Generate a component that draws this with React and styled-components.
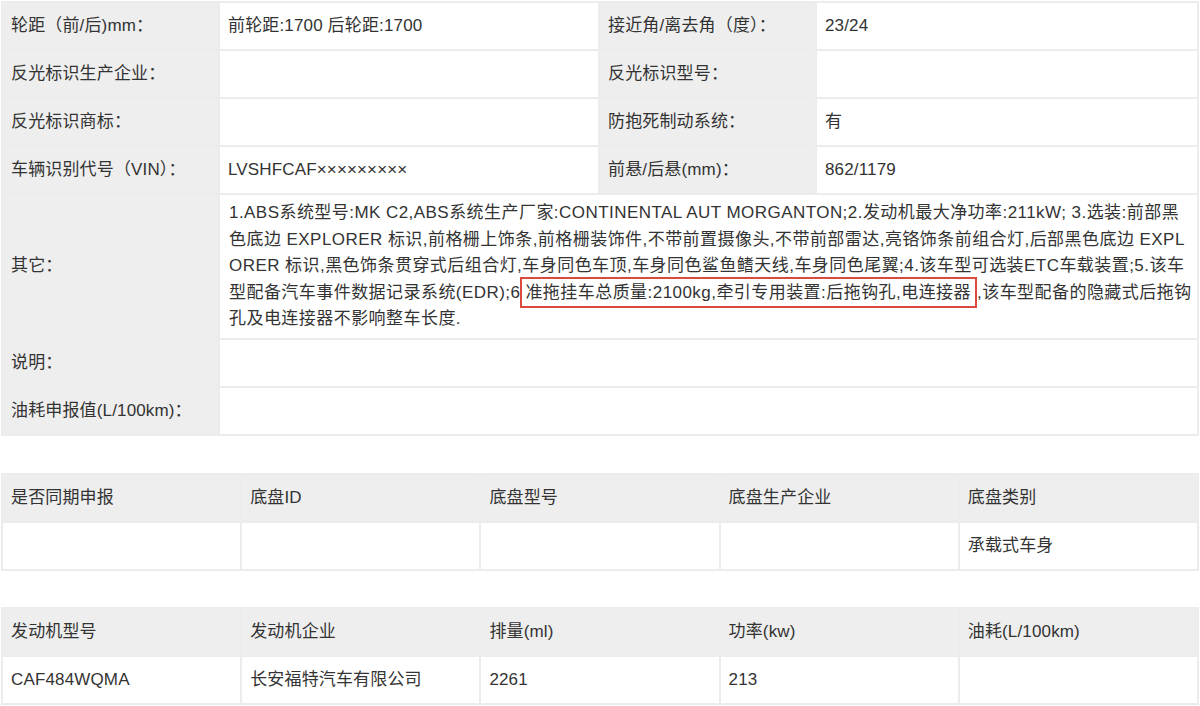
import React from 'react';
import styled, {createGlobalStyle} from 'styled-components';

const GlobalStyle = createGlobalStyle`
  body {
    margin: 0;
    background: #fff;
    color: #333;
    font-family: "Liberation Sans", Arial, "Noto Sans CJK SC", sans-serif;
  }
`;

const Page = styled.div`
  padding: 1px 1px 0 1px;
  width: 1198px;
`;

const Table = styled.table`
  width: 100%;
  table-layout: fixed;
  border-collapse: collapse;
  font-size: 17px;
  margin-top: ${props => props.$gap || 0}px;
`;

const Cell = styled.td`
  border: 2px solid #ececec;
  height: 46px;
  padding: ${props => props.$tall ? '5px 9px' : '0 8px'};
  vertical-align: middle;
  text-align: left;
  line-height: ${props => props.$tall ? '26.5px' : '20px'};
  letter-spacing: ${props => props.$tall ? '0.45px' : '0.15px'};
  background: ${props => props.$head ? '#eeeeee' : '#fff'};
  color: #333;
`;

const Line = styled.span`
  display: block;
  white-space: nowrap;
`;

const Mark = styled.span`
  border: 2px solid #db4a3c;
  padding: 4px 4px 4px 3px;
  margin-left: 0;
`;

const specRows = [
  ['轮距（前/后)mm：', '前轮距:1700 后轮距:1700', '接近角/离去角（度）：', '23/24'],
  ['反光标识生产企业：', '', '反光标识型号：', ''],
  ['反光标识商标：', '', '防抱死制动系统：', '有'],
  ['车辆识别代号（VIN）：', 'LVSHFCAF×××××××××', '前悬/后悬(mm)：', '862/1179'],
];

const chassis = {
  head: ['是否同期申报', '底盘ID', '底盘型号', '底盘生产企业', '底盘类别'],
  body: ['', '', '', '', '承载式车身'],
};

const engine = {
  head: ['发动机型号', '发动机企业', '排量(ml)', '功率(kw)', '油耗(L/100km)'],
  body: ['CAF484WQMA', '长安福特汽车有限公司', '2261', '213', ''],
};

function GridTable({data, gap}) {
  return (
    <Table $gap={gap}>
      <tbody>
        <tr>
          {data.head.map((h, i) => <Cell key={i} $head>{h}</Cell>)}
        </tr>
        <tr>
          {data.body.map((v, i) => <Cell key={i}>{v}</Cell>)}
        </tr>
      </tbody>
    </Table>
  );
}

export default function App() {
  return (
    <Page>
      <GlobalStyle/>
      <Table>
        <colgroup>
          <col style={{width: 217}}/>
          <col style={{width: 380}}/>
          <col style={{width: 217}}/>
          <col/>
        </colgroup>
        <tbody>
          {specRows.map((r, i) => (
            <tr key={i}>
              <Cell $head>{r[0]}</Cell>
              <Cell>{r[1]}</Cell>
              <Cell $head>{r[2]}</Cell>
              <Cell>{r[3]}</Cell>
            </tr>
          ))}
          <tr>
            <Cell $head>其它：</Cell>
            <Cell colSpan={3} $tall>
              <Line>1.ABS系统型号:MK C2,ABS系统生产厂家:CONTINENTAL AUT MORGANTON;2.发动机最大净功率:211kW; 3.选装:前部黑</Line>
              <Line>色底边 EXPLORER 标识,前格栅上饰条,前格栅装饰件,不带前置摄像头,不带前部雷达,亮铬饰条前组合灯,后部黑色底边 EXPL</Line>
              <Line>ORER 标识,黑色饰条贯穿式后组合灯,车身同色车顶,车身同色鲨鱼鳍天线,车身同色尾翼;4.该车型可选装ETC车载装置;5.该车</Line>
              <Line>型配备汽车事件数据记录系统(EDR);6<Mark>准拖挂车总质量:2100kg,牵引专用装置:后拖钩孔,电连接器</Mark>,该车型配备的隐藏式后拖钩</Line>
              <Line>孔及电连接器不影响整车长度.</Line>
            </Cell>
          </tr>
          <tr>
            <Cell $head>说明：</Cell>
            <Cell colSpan={3}></Cell>
          </tr>
          <tr>
            <Cell $head>油耗申报值(L/100km)：</Cell>
            <Cell colSpan={3}></Cell>
          </tr>
        </tbody>
      </Table>
      <GridTable data={chassis} gap={37}/>
      <GridTable data={engine} gap={36}/>
    </Page>
  );
}
